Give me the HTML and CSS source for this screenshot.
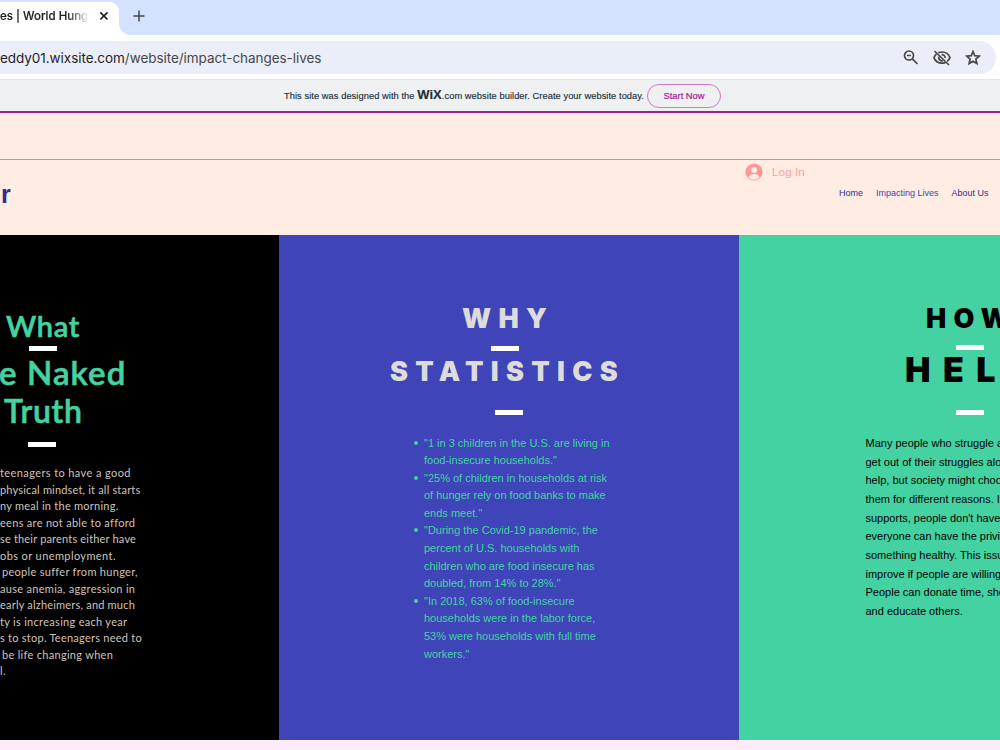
FILE: index.html
```html
<!DOCTYPE html>
<html lang="en">
<head>
  <meta charset="UTF-8">
  <title>Impact Changes Lives | World Hunger</title>
  <link rel="stylesheet" href="styles.css">
</head>
<body>
  <!-- browser bar -->
  <div class="tab-strip">
    <div class="tab">
      <span class="tab-title">es | World Hung</span>
      <svg class="tab-close" width="10" height="10" viewBox="0 0 10 10"><path d="M1.3 1.3l7.2 7.2M8.5 1.3L1.3 8.5"/></svg>
    </div>
    <svg class="tab-curve" width="12" height="12" viewBox="0 0 12 12"><path d="M0 0a12 12 0 0 0 12 12H0z"/></svg>
    <svg class="new-tab" width="12" height="12" viewBox="0 0 12 12"><path d="M6 .5v11M.5 6h11"/></svg>
  </div>
  <div class="toolbar">
    <div class="address">
      <div class="url"><span class="domain">eddy01.wixsite.com</span>/website/impact-changes-lives</div>
      <div class="icons">
        <svg width="16" height="16" viewBox="0 0 16 16"><circle cx="6" cy="5.500" r="4.500"/><path d="M9.300 8.800l5.200 5.200M4 5.500h4"/></svg>
        <svg width="20" height="18" viewBox="0 0 20 18"><path d="M2.500 2l14.500 14M6.300 3.800Q8 3 10 3c3.700 0 6.600 2.100 8 5.600-.6 1.400-1.500 2.700-2.700 3.600M4.300 5.100C3.300 6 2.500 7.200 1.900 8.600 3.300 12.200 6.300 14.200 10 14.200c1.100 0 2.200-.2 3.200-.6M9.600 5.600a3.200 3.200 0 0 1 3.500 3.500M6.900 7.800a3.200 3.200 0 0 0 4 3.900"/></svg>
        <svg width="16" height="16" viewBox="0 0 16 16"><path d="M8 1.500l1.700 4.200 4.700.4-3.500 3 1 4.400L8 11.200l-3.900 2.300 1-4.400-3.500-3 4.700-.4z"/></svg>
      </div>
    </div>
  </div>

  <!-- wix banner -->
  <div class="banner">
    <span class="banner-text">This site was designed with the <b class="wix">W<i>i</i>X</b>.com website builder. Create your website today.</span>
    <a class="start">Start Now</a>
  </div>

  <header class="header">
    <div class="top-space"></div>
    <div class="header-row">
      <div class="logo">r</div>
      <div class="login">
        <svg width="18" height="18" viewBox="0 0 18 18"><circle cx="9" cy="9" r="8.600" fill="#ff9794"/><circle cx="9" cy="7" r="3" fill="#ffede3"/><path d="M3.400 14.500c.8-2.500 3-3.500 5.600-3.500s4.800 1 5.600 3.500A8 8 0 0 1 9 16.700a8 8 0 0 1-5.600-2.200z" fill="#ffede3"/></svg>
        <span>Log In</span>
      </div>
      <nav class="nav">
        <a>Home</a>
        <a class="current">Impacting Lives</a>
        <a>About Us</a>
      </nav>
    </div>
  </header>

  <main class="columns">
    <section class="what">
      <h2 class="first">What</h2>
      <div class="dash"></div>
      <h2 class="naked">e Naked</h2>
      <h2 class="truth">Truth</h2>
      <div class="dash low"></div>
      <div class="story">
        <p>teenagers to have a good</p>
        <p>physical mindset, it all starts</p>
        <p>ny meal in the morning.</p>
        <p>eens are not able to afford</p>
        <p>se their parents either have</p>
        <p>obs or unemployment.</p>
        <p>people suffer from hunger,</p>
        <p>ause anemia, aggression in</p>
        <p>early alzheimers, and much</p>
        <p>ty is increasing each year</p>
        <p>s to stop. Teenagers need to</p>
        <p>be life changing when</p>
        <p>l.</p>
      </div>
    </section>

    <section class="why">
      <h2>WHY</h2>
      <div class="dash"></div>
      <h2 class="stats">STATISTICS</h2>
      <div class="dash low"></div>
      <ul>
        <li>"1 in 3 children in the U.S. are living in<br>food-insecure households."</li>
        <li>"25% of children in households at risk<br>of hunger rely on food banks to make<br>ends meet."</li>
        <li>"During the Covid-19 pandemic, the<br>percent of U.S. households with<br>children who are food insecure has<br>doubled, from 14% to 28%."</li>
        <li>"In 2018, 63% of food-insecure<br>households were in the labor force,<br>53% were households with full time<br>workers."</li>
      </ul>
    </section>

    <section class="how">
      <h2>HOW</h2>
      <div class="dash"></div>
      <h2 class="help">HEL</h2>
      <div class="dash low"></div>
      <p>Many people who struggle a<br>get out of their struggles alo<br>help, but society might choo<br>them for different reasons. It<br>supports, people don't have<br>everyone can have the privil<br>something healthy. This issu<br>improve if people are willing<br>People can donate time, sho<br>and educate others.</p>
    </section>
  </main>
</body>
</html>
```

FILE: styles.css
```css
* {
  box-sizing: border-box;
}
body {
  margin: 0;
  height: 750px;
  overflow: hidden;
  background: #fbecf7;
  font-family: "Liberation Sans", Arial, sans-serif;
}
h2, p, ul {
  margin: 0;
  padding: 0;
}
svg {
  fill: none;
  stroke-width: 1.7;
  flex: none;
}

/* browser */
.tab-strip {
  display: flex;
  height: 35px;
  background: #d3e3fd;
}
.tab {
  display: flex;
  align-items: center;
  width: 119px;
  height: 33px;
  margin-top: 2px;
  padding-bottom: 6px;
  background: #fff;
  border-radius: 0 9px 0 0;
  box-shadow: 0 2px #fff;
}
.tab-title {
  width: 89px;
  overflow: hidden;
  white-space: nowrap;
  font: 500 11.5px Inter, sans-serif;
  color: #1f1f1f;
  -webkit-text-stroke: 0.2px #1f1f1f;
  -webkit-mask-image: linear-gradient(to right, #000 68px, transparent 89px);
}
.tab-close {
  margin-left: 10px;
  stroke: #1f1f1f;
}
.tab-curve {
  align-self: flex-end;
  fill: #fff;
}
.new-tab {
  margin: 10px 0 0 2px;
  stroke: #444;
  stroke-width: 1.5;
}
.toolbar {
  height: 44px;
  padding: 6px 4px 0 0;
  background: #fff;
}
.address {
  display: flex;
  justify-content: space-between;
  align-items: center;
  height: 33px;
  padding-right: 15px;
  background: #ebeef8;
  border-radius: 0 17px 17px 0;
}
.url {
  font: 13.5px Inter, sans-serif;
  letter-spacing: -0.05px;
  color: #474747;
}
.domain {
  color: #1f1f1f;
}
.icons {
  display: flex;
  align-items: center;
  gap: 13px;
  stroke: #474747;
}

/* banner */
.banner {
  display: flex;
  align-items: center;
  height: 34px;
  padding-left: 284px;
  background: #eff0f2;
  border-top: 1px solid #e3e5e4;
  border-bottom: 2px solid #a51b91;
  font-size: 9.3px;
  color: #20303c;
  white-space: nowrap;
}
.banner-text {
  width: 363px;
  padding-bottom: 2px;
  letter-spacing: 0.06px;
  -webkit-text-stroke: 0.15px #20303c;
}
.wix {
  font-size: 13px;
  line-height: 1;
}
.wix i {
  font-style: normal;
}
.start {
  width: 74px;
  height: 24px;
  border: 1px solid #cf78c3;
  border-radius: 12px;
  line-height: 22px;
  text-align: center;
  color: #a51b91;
  -webkit-text-stroke: 0.2px #a51b91;
}

/* header */
.header {
  height: 122px;
  background: #ffede3;
}
.top-space {
  height: 47px;
  border-bottom: 1px solid #aaa0b0;
}
.header-row {
  display: flex;
  align-items: flex-start;
  height: 75px;
  white-space: nowrap;
}
.logo {
  width: 745px;
  padding: 19px 0 0 1px;
  font: bold 25px/30px "Liberation Sans", Arial, sans-serif;
  color: #2f2e8b;
}
.login {
  display: flex;
  align-items: center;
  gap: 9px;
  width: 94px;
  padding-top: 3px;
  font-size: 11.8px;
  color: #ff9f9c;
}
.nav {
  display: flex;
  gap: 13px;
  padding-top: 27px;
  font-size: 9px;
  line-height: 12px;
  color: #2f2e8b;
}
.nav .current {
  color: #4145b8;
}

/* columns */
.columns {
  display: grid;
  grid-template-columns: 279px 460px 261px;
  height: 505px;
}
section {
  overflow: hidden;
  white-space: nowrap;
}
.dash {
  width: 28px;
  height: 5px;
  background: #fff;
}
.what {
  background: #000;
  color: #44d2a2;
}
.what h2 {
  font: 600 29px/38px Lato, sans-serif;
  letter-spacing: 0.7px;
  -webkit-text-stroke: 0.6px #44d2a2;
}
.what .first {
  margin: 72px 0 1px 6px;
}
.what .dash {
  margin-left: 29px;
}
.what .naked {
  margin: 2px 0 0 -1px;
  font-size: 33px;
  letter-spacing: 1.1px;
}
.what .truth {
  margin: 1px 0 0 4px;
  font-size: 32px;
}
.what .low {
  margin: 12px 0 0 28px;
}
.story {
  padding-top: 18px;
  font: 11px/16.5px Lato, sans-serif;
  letter-spacing: 0.4px;
  color: #d0c3bc;
}
.story p:nth-child(2), .story p:nth-child(5) { letter-spacing: 0.18px; }
.story p:nth-child(3), .story p:nth-child(11) { letter-spacing: 0.25px; }
.story p:nth-child(4), .story p:nth-child(8), .story p:nth-child(10) { letter-spacing: 0.3px; }
.story p:nth-child(9) { letter-spacing: 0.2px; }
.story p:nth-child(7), .story p:nth-child(12) {
  margin-left: 2px;
  letter-spacing: 0.3px;
}

.why {
  background: #3f45b9;
  color: #dcdcdc;
}
.why h2, .how h2 {
  font: 900 27px/32px Inter, sans-serif;
  letter-spacing: 7.3px;
}
.why h2 {
  margin: 68px 0 0 183px;
}
.why .dash {
  margin: 11px 0 0 212px;
}
.why .stats {
  margin: 5px 0 0 111px;
}
.why .low {
  margin: 22px 0 0 216px;
}
.why ul {
  margin: 19.5px 0 0 145px;
  list-style: none;
  font-size: 11px;
  line-height: 17.6px;
  color: #44d2a2;
}
.why li::before {
  content: "";
  float: left;
  width: 4px;
  height: 4px;
  margin: 6px 0 0 -10px;
  border-radius: 50%;
  background: #44d2a2;
}

.how {
  background: #44d2a2;
  color: #000;
}
.how h2 {
  margin: 68px 0 0 187px;
}
.how .dash {
  margin: 10px 0 0 217px;
}
.how .help {
  margin: 0 0 0 166px;
  font-size: 34px;
  line-height: 40px;
  letter-spacing: 12.5px;
}
.how .low {
  margin-top: 20px;
}
.how p {
  margin: 19px 0 0 126.5px;
  font-size: 11px;
  line-height: 18.65px;
}
```
